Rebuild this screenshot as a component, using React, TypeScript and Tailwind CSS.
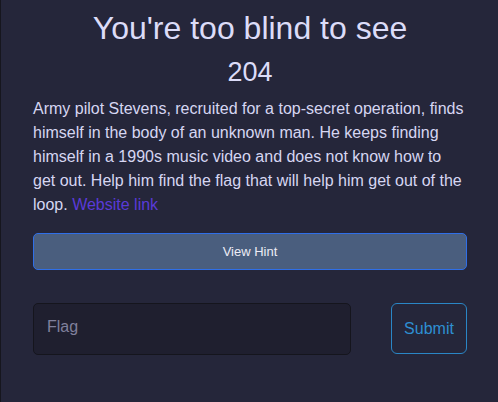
export default function App() {
  return (
    <div
      className="min-h-[402px] w-[498px] bg-[#25263a] border-l border-[#16161e] pl-8 pr-[31px] pt-[8px] text-[#d8d8f4]"
      style={{ fontFamily: '"Liberation Sans", Arial, sans-serif' }}
    >
      {/* Title */}
      <h1 className="text-center text-[32px] leading-[40px] text-[#dcdcf8]">You're too blind to see</h1>
      <p className="text-center text-[27px] leading-[32px] text-[#dcdcf8] mt-[8px]">204</p>

      {/* Description */}
      <p className="text-[16px] leading-[24px] mt-[9px] text-[#d6d6f2]">
        Army pilot Stevens, recruited for a top-secret operation, finds himself in the body of an unknown man. He keeps finding himself in a 1990s music video and does not know how to get out. Help him find the flag that will help him get out of the loop.{' '}
        <a href="#" className="text-[#5a3ad8]">Website link</a>
      </p>

      {/* Hint */}
      <button className="mt-[16px] w-full h-[37px] rounded-[5px] border border-[#2f6fe8] bg-[#4a5e7e] text-[13px] text-[#ececf6]">
        View Hint
      </button>

      {/* Flag form */}
      <div className="mt-[33px] flex items-start justify-between">
        <div className="w-[318px] h-[52px] rounded-[5px] border border-[#15151d] bg-[#1f1f2f] flex items-start pt-[13px] pl-[13px]">
          <span className="text-[16px] leading-[20px] text-[#80809c]">Flag</span>
        </div>
        <button className="w-[76px] h-[51px] rounded-[6px] border border-[#2a86c6] text-[16px] text-[#2e8fd2]">
          Submit
        </button>
      </div>
    </div>
  )
}
